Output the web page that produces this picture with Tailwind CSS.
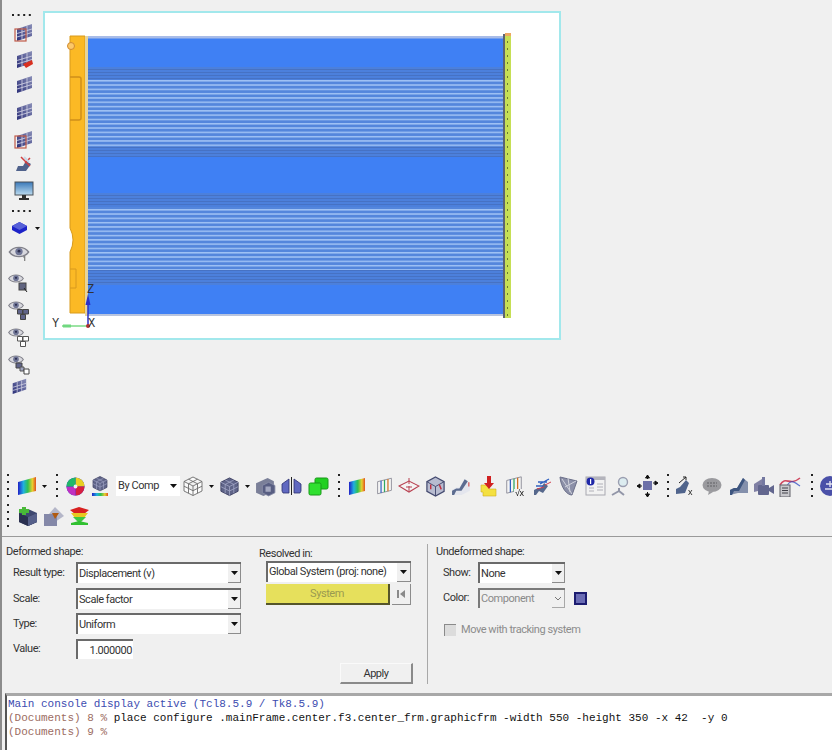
<!DOCTYPE html>
<html><head><meta charset="utf-8">
<script src="https://cdn.jsdelivr.net/npm/@tailwindcss/browser@4"></script>
</head>
<body class="m-0 bg-[#f0f0f0]">
<svg width="0" height="0" class="absolute">
<defs>
<linearGradient id="rb" x1="0" x2="1" y1="0" y2="0"><stop offset="0" stop-color="#2020c8"/><stop offset=".3" stop-color="#20b0e0"/><stop offset=".55" stop-color="#30c050"/><stop offset=".8" stop-color="#e8d030"/><stop offset="1" stop-color="#e05020"/></linearGradient>
<linearGradient id="pn" x1="0" x2="1" y1="1" y2="0"><stop offset="0" stop-color="#2b2f78"/><stop offset="1" stop-color="#8a8fb8"/></linearGradient>
<linearGradient id="sc" x1="0" x2="0" y1="0" y2="1"><stop offset="0" stop-color="#3a78b8"/><stop offset="1" stop-color="#bcdcf0"/></linearGradient>
<symbol id="eye" viewBox="0 0 24 16"><path d="M1 8C6 1 18 1 23 8C18 15 6 15 1 8Z" fill="#d8d8de" stroke="#80808a" stroke-width="1.6"/><circle cx="12" cy="7.5" r="4.2" fill="#6f7596"/><circle cx="12" cy="7" r="1.6" fill="#2d2f50"/></symbol>
<symbol id="panel" viewBox="0 0 20 20"><path d="M3 7L18 2V14L3 19Z" fill="url(#pn)"/><path d="M8 5.5V17.5M13 4V16M3 11.5L18 7M3 15L18 10.5" stroke="#d8d8e8" stroke-width=".8" fill="none"/></symbol>
<symbol id="dotsv" viewBox="0 0 4 26"><rect x="1" y="1" width="2" height="2" fill="#222"/><rect x="1" y="8" width="2" height="2" fill="#222"/><rect x="1" y="15" width="2" height="2" fill="#222"/><rect x="1" y="22" width="2" height="2" fill="#222"/></symbol>
<symbol id="cube" viewBox="0 0 22 22"><path d="M11 2L20 6.5V16L11 20.5L2 16V6.5Z" fill="#5f6488" stroke="#3d4063" stroke-width="1"/><path d="M2 6.5L11 11L20 6.5M11 11V20.5M6.5 4.2L15.5 8.8M15.500 4.200L6.500 8.800M6.500 8.800V18.200M15.500 8.800V18.200M2 11.200L11 15.700L20 11.200" stroke="#a4a8c8" stroke-width=".8" fill="none"/></symbol>
<symbol id="lines" viewBox="0 0 22 22"><path d="M3 6L19 2V16L3 20Z" fill="#f4f4f4" stroke="#8a8a96"/><path d="M7 5V19" stroke="#3060c0" stroke-width="1.4"/><path d="M11 4V18" stroke="#30a860" stroke-width="1.4"/><path d="M15 3V17" stroke="#d07020" stroke-width="1.4"/></symbol>
</defs>
</svg>

<div class="w-[832px] h-[750px] overflow-hidden flex flex-col font-['Roboto',sans-serif] text-[11px] leading-[14px] tracking-[-0.45px] text-[#333] border-l-2 border-[#8c8c8c] box-border">

  <!-- workspace -->
  <div class="flex h-[472px] shrink-0 pt-[11px] blur-[0.3px]">
    <div class="w-[41px] shrink-0 flex flex-col items-center -mt-[11px]">
      <svg class="w-[24px] h-[2px] mt-[14px] shrink-0" viewBox="0 0 24 2"><path d="M1 1H22" stroke="#222" stroke-width="2" stroke-dasharray="2 3.6"/></svg>
      <svg class="w-[20px] h-[20px] mt-[6px] ml-[3px] shrink-0"><use href="#panel"/><rect x="1" y="7" width="11" height="12" fill="none" stroke="#c05a48" stroke-width="1.2"/></svg>
      <svg class="w-[20px] h-[20px] mt-[7px] ml-[3px] shrink-0"><use href="#panel"/><path d="M9 15L18 11L19 15L12 19Z" fill="#d83020"/></svg>
      <svg class="w-[20px] h-[20px] mt-[5px] ml-[3px] shrink-0"><use href="#panel"/></svg>
      <svg class="w-[20px] h-[20px] mt-[7px] ml-[3px] shrink-0"><use href="#panel"/></svg>
      <svg class="w-[20px] h-[20px] mt-[8px] ml-[3px] shrink-0"><use href="#panel"/><rect x="1" y="7" width="11" height="12" fill="none" stroke="#c05a48" stroke-width="1.2"/></svg>
      <svg class="w-[20px] h-[20px] mt-[5px] ml-[3px] shrink-0" viewBox="0 0 20 20"><path d="M2 17L4 12H9L12 7L17 10L12 17Z" fill="#50628c"/><path d="M7 3L16 12M16 4L11 9" stroke="#d04040" stroke-width="1.5"/><path d="M10 3L15 8" stroke="#c8d8e8" stroke-width="2"/></svg>
      <svg class="w-[20px] h-[20px] mt-[7px] ml-[3px] shrink-0" viewBox="0 0 20 20"><rect x="1" y="1" width="18" height="13" fill="url(#sc)" stroke="#4a5058"/><rect x="8" y="14" width="4" height="3" fill="#303030"/><rect x="5" y="17" width="10" height="2" fill="#303030"/></svg>
      <svg class="w-[24px] h-[2px] mt-[9px] shrink-0" viewBox="0 0 24 2"><path d="M1 1H22" stroke="#222" stroke-width="2" stroke-dasharray="2 3.6"/></svg>
      <div class="flex items-center w-full h-[14px] mt-[9px] pl-[9px] gap-[7px]">
        <svg class="w-[17px] h-[14px]" viewBox="0 0 17 14"><path d="M8.500 1L16 5V9L8.500 13L1 9V5Z" fill="#1c22c8"/><path d="M8.500 1L16 5L8.500 9L1 5Z" fill="#5660d8"/></svg>
        <svg class="w-[5px] h-[3px]" viewBox="0 0 5 3"><path d="M0 0H5L2.500 3Z" fill="#111"/></svg>
      </div>
      <div class="relative w-[22px] h-[14px] mt-[10px] -ml-[8px]"><svg class="w-[22px] h-[14px]"><use href="#eye"/></svg><span class="absolute left-[15px] top-[10px] text-[7px] leading-[8px] font-bold text-[#666]">1</span></div>
      <div class="relative w-[22px] h-[12px] mt-[14px] -ml-[8px]"><svg class="w-[16px] h-[11px]"><use href="#eye"/></svg><svg class="absolute left-[10px] top-[9px] w-[10px] h-[11px]" viewBox="0 0 10 11"><rect x="1" y="1" width="7" height="7" fill="#606480" stroke="#444"/><path d="M6 6L9 10" stroke="#222"/></svg></div>
      <div class="relative w-[22px] h-[12px] mt-[15px] -ml-[8px]"><svg class="w-[16px] h-[11px]"><use href="#eye"/></svg><svg class="absolute left-[9px] top-[9px] w-[12px] h-[11px]" viewBox="0 0 12 11"><path d="M.5.5H5.500V5H.5ZM6 .5H11.500V5H6ZM3.500 5.500H8.500V10.500H3.500Z" fill="#60648a" stroke="#444"/></svg></div>
      <div class="relative w-[22px] h-[12px] mt-[15px] -ml-[8px]"><svg class="w-[16px] h-[11px]"><use href="#eye"/></svg><svg class="absolute left-[9px] top-[9px] w-[12px] h-[11px]" viewBox="0 0 12 11"><path d="M.5.5H5.500V5H.5ZM6 .5H11.500V5H6ZM3.500 5.500H8.500V10.500H3.500Z" fill="#fff" stroke="#555"/></svg></div>
      <div class="relative w-[22px] h-[12px] mt-[15px] -ml-[8px]"><svg class="w-[16px] h-[11px]"><use href="#eye"/></svg><svg class="absolute left-[7px] top-[8px] w-[15px] h-[13px]" viewBox="0 0 15 13"><path d="M1 1H7V6H1Z" fill="#60648a" stroke="#444"/><path d="M5 5H9V9H5Z" fill="#a0a4c0" stroke="#555"/><path d="M9 7H14V12H9Z" fill="#fff" stroke="#444"/></svg></div>
      <svg class="w-[18px] h-[18px] mt-[11px] -ml-[8px] shrink-0"><use href="#panel"/></svg>
    </div>

    <!-- graphics frame -->
    <div class="w-[518px] h-[329px] shrink-0 border-2 border-[#a2e8ec] bg-white overflow-hidden box-border">
      <svg class="-ml-[2px] -mt-[2px] block" width="518" height="329" viewBox="43 11 518 329">
        <defs>
          <pattern id="st" width="415" height="4.300" patternUnits="userSpaceOnUse" y="80"><rect width="415" height="4.300" fill="#5486dc"/><rect width="415" height="1.500" fill="#a0c2f4"/></pattern>
          <pattern id="dk" width="415" height="3" patternUnits="userSpaceOnUse"><rect width="415" height="3" fill="#4c80dc"/><rect width="415" height="1" fill="#4672c4"/></pattern>
        </defs>
        <rect x="88" y="36" width="415" height="280" fill="#3f80f4"/>
        <rect x="88" y="36" width="415" height="2.500" fill="#a8bce8"/>
        <rect x="88" y="80" width="415" height="67" fill="url(#st)"/>
        <rect x="88" y="67" width="415" height="13" fill="url(#dk)"/>
        <rect x="88" y="147" width="415" height="10" fill="url(#dk)"/>
        <rect x="88" y="207" width="415" height="63" fill="url(#st)"/>
        <rect x="88" y="193" width="415" height="14" fill="url(#dk)"/>
        <rect x="88" y="270" width="415" height="15" fill="url(#dk)"/>
        <rect x="88" y="314" width="415" height="2" fill="#b8c4de"/>
        <path d="M70 36H85V313H70V252Q76 240 70 228Z" fill="#fbb925" stroke="#d89a1c" stroke-width="1"/>
        <rect x="85" y="36" width="3" height="280" fill="#e6d49a"/>
        <circle cx="71" cy="46" r="3.500" fill="#fcc868" stroke="#d08a30"/>
        <path d="M70 77H79Q81 77 81 79V118Q81 120 79 120H70" fill="none" stroke="#d08f1a" stroke-width="1.500"/>
        <path d="M70 269H76V288H70" fill="none" stroke="#d8991e" stroke-width="1"/>
        <rect x="503" y="34" width="2" height="284" fill="#5c6470"/>
        <rect x="505" y="34" width="6" height="284" fill="#c6df55"/>
        <path d="M507.500 34V318" stroke="#6c7a30" stroke-width="1" stroke-dasharray="2 5"/>
        <rect x="505" y="33" width="6" height="3" fill="#eda860"/>
        <path d="M88 325V299" stroke="#2a30c8" stroke-width="1.500"/><path d="M88 294L90.500 305H85.500Z" fill="#2a30c8"/>
        <path d="M62 326H88" stroke="#38c848" stroke-width="1"/><rect x="63" y="324.500" width="8" height="3" fill="#70d880"/>
        <circle cx="88" cy="326" r="2" fill="#b03030"/>
        <text x="87" y="293" font-family="Liberation Mono" font-size="12" fill="#333">Z</text>
        <text x="52" y="327" font-family="Liberation Mono" font-size="12" fill="#333">Y</text>
        <text x="88" y="327" font-family="Liberation Mono" font-size="12" fill="#333">X</text>
      </svg>
    </div>
  </div>

  <!-- toolbar -->
  <div class="h-[64px] shrink-0 flex flex-col blur-[0.3px]">
    <div class="flex items-center h-[26px] mt-[1px] whitespace-nowrap [&>*]:shrink-0">
      <span class="w-[12px] flex justify-center"><svg class="w-[4px] h-[26px] shrink-0"><use href="#dotsv"/></svg></span>
      <span class="w-[26px] flex justify-center"><svg class="w-[20px] h-[20px] shrink-0" viewBox="0 0 20 20"><path d="M1 6L19 1V15L1 19Z" fill="url(#rb)"/></svg></span>
      <span class="w-[8px] flex justify-center"><svg class="w-[5px] h-[3px]" viewBox="0 0 5 3"><path d="M0 0H5L2.500 3Z" fill="#111"/></svg></span>
      <span class="w-[18px] flex justify-center"><svg class="w-[4px] h-[26px] shrink-0"><use href="#dotsv"/></svg></span>
      <span class="w-[18px] flex justify-center"><svg class="w-[19px] h-[19px] shrink-0" viewBox="0 0 20 20"><circle cx="10" cy="10" r="9.500" fill="#2030d0"/><path d="M10 10L10 .5A9.500 9.500 0 0 1 19.500 10Z" fill="#e8d020"/><path d="M10 10L19.500 10A9.500 9.500 0 0 1 10 19.500Z" fill="#d82040"/><path d="M10 10L10 19.500A9.500 9.500 0 0 1 .5 10Z" fill="#c030c0"/><path d="M10 10L.5 10A9.500 9.500 0 0 1 10 .5Z" fill="#20b868"/><circle cx="10" cy="10" r="2" fill="#f0f0f0"/></svg></span>
      <span class="w-[32px] flex justify-center"><svg class="w-[20px] h-[22px] shrink-0" viewBox="0 0 20 22"><use href="#cube" width="18" height="17" x="1" y="0"/><rect x="2" y="18" width="16" height="3" fill="url(#rb)"/></svg></span>
      <div class="w-[64px] h-[20px] bg-white flex items-center justify-between pl-[2px] pr-[3px]"><span class="text-[11px]">By Comp</span><svg class="w-[7px] h-[4px]" viewBox="0 0 7 4"><path d="M0 0H7L3.500 4Z" fill="#111"/></svg></div>
      <span class="w-[26px] flex justify-center"><svg class="w-[22px] h-[22px] shrink-0 opacity-70" viewBox="0 0 22 22"><path d="M11 2L20 6.500V16L11 20.500L2 16V6.500ZM2 6.500L11 11L20 6.500M11 11V20.500M6.500 4.200L15.500 8.800M15.500 4.200L6.500 8.800M6.500 8.800V18.200M15.500 8.800V18.200M2 11.200L11 15.700L20 11.200" stroke="#333" fill="#fff" stroke-width=".9"/></svg></span>
      <span class="w-[10px] flex justify-center"><svg class="w-[5px] h-[3px]" viewBox="0 0 5 3"><path d="M0 0H5L2.500 3Z" fill="#111"/></svg></span>
      <span class="w-[26px] flex justify-center"><svg class="w-[21px] h-[21px] shrink-0"><use href="#cube"/></svg></span>
      <span class="w-[10px] flex justify-center"><svg class="w-[5px] h-[3px]" viewBox="0 0 5 3"><path d="M0 0H5L2.500 3Z" fill="#111"/></svg></span>
      <span class="w-[26px] flex justify-center"><svg class="w-[21px] h-[21px] shrink-0" viewBox="0 0 20 20"><path d="M1 7L12 2L18 5V15L8 19L1 16Z" fill="#7a7f98"/><path d="M7 9L13 6L19 9V16L13 19L7 16Z" fill="#585e82" stroke="#8a8fa8" stroke-width=".8"/><rect x="10" y="10" width="5" height="5" fill="#a4a8c0"/></svg></span>
      <span class="w-[26px] flex justify-center"><svg class="w-[21px] h-[20px] shrink-0" viewBox="0 0 21 20"><path d="M1 15V8L8 3V17H2Z" fill="#6068c0" stroke="#2c3070" stroke-width=".8"/><path d="M20 15V8L13 3V17H19Z" fill="#6068c0" stroke="#2c3070" stroke-width=".8"/><path d="M10.500 1V19" stroke="#222"/></svg></span>
      <span class="w-[28px] flex justify-center"><svg class="w-[21px] h-[19px] shrink-0" viewBox="0 0 21 19"><rect x="7" y="1" width="13" height="11" rx="1.500" fill="#20d020" stroke="#189818"/><rect x="1" y="6" width="12" height="12" rx="1.500" fill="#30e030" stroke="#189818"/></svg></span>
      <span class="w-[14px] flex justify-center"><svg class="w-[4px] h-[26px] shrink-0"><use href="#dotsv"/></svg></span>
      <span class="w-[22px] flex justify-center"><svg class="w-[18px] h-[19px] shrink-0" viewBox="0 0 18 19"><path d="M1 5L17 1V14L1 18Z" fill="url(#rb)"/></svg></span>
      <span class="w-[32px] flex justify-center"><svg class="w-[19px] h-[20px] shrink-0"><use href="#lines"/></svg></span>
      <span class="w-[18px] flex justify-center"><svg class="w-[22px] h-[18px] shrink-0" viewBox="0 0 22 18"><path d="M1 9L11 4L21 9L11 15Z" fill="#f4f4f4" stroke="#b84050" stroke-width="1.100"/><path d="M11 1V7M8 10H14M11 9V14" stroke="#b84050"/></svg></span>
      <span class="w-[34px] flex justify-center"><svg class="w-[21px] h-[21px] shrink-0" viewBox="0 0 22 22"><path d="M11 1L20 6V16L11 21L2 16V6Z" fill="#b8bcd0" stroke="#444a70" stroke-width="1.300"/><path d="M2 6L11 11L20 6M11 11V21" stroke="#444a70" fill="none"/><path d="M6 9V14M15 9L17 14" stroke="#c03040" stroke-width="1.500"/></svg></span>
      <span class="w-[18px] flex justify-center"><svg class="w-[21px] h-[21px] shrink-0" viewBox="0 0 20 20"><path d="M1 18V13L5 11H8L13 3L18 7V14L10 18Z" fill="#e4e6ee"/><path d="M1 18V14L5 12H8L13 3L16 5L10 14H5L3 18Z" fill="#5c6c90"/><path d="M17 6V10" stroke="#d04040"/></svg></span>
      <span class="w-[36px] flex justify-center"><svg class="w-[17px] h-[22px] shrink-0" viewBox="0 0 17 22"><path d="M1 10H9V14H16V21H3V17H1Z" fill="#f4e040" stroke="#d0b020" stroke-width=".6"/><path d="M7 1H11V8H14L9 14L4 8H7Z" fill="#d02020"/></svg></span>
      <span class="w-[18px] flex justify-center"><svg class="w-[22px] h-[22px] shrink-0" viewBox="0 0 22 22"><use href="#lines" width="20" height="20"/><rect x="10" y="14" width="11" height="7" fill="#f0f0f0"/><text x="11" y="21" font-family="Liberation Sans" font-size="9" fill="#111">√x</text></svg></span>
      <span class="w-[26px] ml-[6px] flex justify-center"><svg class="w-[20px] h-[20px] shrink-0" viewBox="0 0 20 20"><path d="M1 19V14L5 12H8L11 7L15 10L10 17L6 15L3 19Z" fill="#56688c"/><path d="M5 6H14M3 10H10M7 8L16 3" stroke="#3060c0" stroke-width="1.400"/><path d="M4 13L11 11M12 9L18 6" stroke="#d04050"/></svg></span>
      <span class="w-[24px] flex justify-center"><svg class="w-[19px] h-[21px] shrink-0" viewBox="0 0 19 21"><path d="M1 1L18 5L13 19C8 19 2 12 1 1Z" fill="#8c90a8" stroke="#6a6e88"/><path d="M3 3L13 18M17 5L6 11M9 2L11 16" stroke="#d0d2dc" stroke-width="1"/></svg></span>
      <span class="w-[30px] flex justify-center"><svg class="w-[21px] h-[20px] shrink-0" viewBox="0 0 21 20"><rect x="1" y="1" width="19" height="18" fill="#f2f2f2" stroke="#a8a8b0"/><rect x="1" y="1" width="19" height="3" fill="#b4b4bc"/><circle cx="5.500" cy="5.500" r="4" fill="#2028a8"/><rect x="5" y="3" width="1.200" height="5" fill="#fff"/><path d="M12 8H18M12 11H18M12 14H18M4 12H9M4 15H9" stroke="#b0b0b8"/></svg></span>
      <span class="w-[20px] flex justify-center"><svg class="w-[20px] h-[21px] shrink-0" viewBox="0 0 20 21"><circle cx="13" cy="6" r="4.500" fill="#dcecf0" stroke="#9a9eb0" stroke-width="1.400"/><path d="M9 12V15M9 15L2 19M9 15L14 19" stroke="#9296a8" stroke-width="2" fill="none"/></svg></span>
      <span class="w-[34px] flex justify-center"><svg class="w-[21px] h-[22px] shrink-0" viewBox="0 0 21 22"><rect x="6" y="6" width="9" height="9" fill="#6c70a8"/><path d="M10.500 0V4M8.500 3H12.500L10.500 0ZM10.500 17V22M8.500 19H12.500L10.500 22ZM1 11H5M3 9V13L0 11ZM16 8H20M18 6V10L21 8Z" stroke="#111" fill="#111"/></svg></span>
      <span class="w-[8px] flex justify-center"><svg class="w-[4px] h-[26px] shrink-0"><use href="#dotsv"/></svg></span>
      <span class="w-[26px] flex justify-center"><svg class="w-[20px] h-[20px] shrink-0" viewBox="0 0 20 20"><path d="M1 18V13L5 11L11 4L14 7L10 17Z" fill="#50648c"/><path d="M4 7L11 1M11 1H8M11 1V4" stroke="#222" fill="none"/><text x="13" y="19" font-family="Liberation Sans" font-size="9" fill="#222">x</text></svg></span>
      <span class="w-[28px] flex justify-center"><svg class="w-[20px] h-[18px] shrink-0" viewBox="0 0 20 18"><ellipse cx="10" cy="8" rx="9.500" ry="7" fill="#9a9a9e"/><path d="M7 14L6 18L11 15Z" fill="#9a9a9e"/><path d="M5 6H15M5 9H15" stroke="#606064" stroke-dasharray="2 1"/></svg></span>
      <span class="w-[26px] flex justify-center"><svg class="w-[20px] h-[20px] shrink-0" viewBox="0 0 20 20"><path d="M1 19V14L5 12H8L14 2L19 6V17H9Z" fill="#8490ac"/><path d="M1 19V14L5 12H8L14 2L16 4L10 15H5L3 19Z" fill="#3e5680"/></svg></span>
      <span class="w-[24px] flex justify-center"><svg class="w-[22px] h-[21px] shrink-0" viewBox="0 0 22 21"><path d="M1 8L9 3V14L1 16Z" fill="#8080a4"/><rect x="5" y="9" width="11" height="10" rx="1" fill="#62668e"/><path d="M16 12L21 9V18L16 15Z" fill="#62668e"/><rect x="9" y="1" width="3" height="9" fill="#7478a0"/></svg></span>
      <span class="w-[28px] flex justify-center"><svg class="w-[22px] h-[22px] shrink-0" viewBox="0 0 22 22"><path d="M1 10C7 0 10 12 21 3" stroke="#d04860" stroke-width="1.600" fill="none"/><path d="M7 13C11 3 15 7 21 11" stroke="#2040c0" stroke-width="1.200" fill="none" opacity=".7"/><rect x="1" y="10" width="10" height="12" fill="#c8c8cc" stroke="#606068"/><path d="M3 13H9M3 15.500H9M3 18H9" stroke="#404048"/></svg></span>
      <span class="w-[16px] flex justify-center"><svg class="w-[4px] h-[26px] shrink-0"><use href="#dotsv"/></svg></span>
      <span class="w-[20px] flex justify-start"><svg class="w-[20px] h-[20px] shrink-0" viewBox="0 0 20 20"><circle cx="10" cy="10" r="10" fill="#4a50a8"/><path d="M6 8H14M10 5V11M5 13H15" stroke="#e0e0f0" stroke-width="1.400"/></svg></span>
    </div>
    <div class="flex items-center h-[26px] mt-[4px] [&>*]:shrink-0">
      <span class="w-[12px] flex justify-center"><svg class="w-[4px] h-[26px] shrink-0"><use href="#dotsv"/></svg></span>
      <span class="w-[26px] flex justify-center"><svg class="w-[21px] h-[21px] shrink-0" viewBox="0 0 21 21"><path d="M2 7L11 3L20 7V16L11 20L2 16Z" fill="#3e4870"/><path d="M2 7L11 11L20 7V16L11 20L2 16Z" fill="#2a3050"/><path d="M11 11V20L20 16V7Z" fill="#56608a"/><path d="M5 1H9V3H12V7H9V9H5V7H2V3H5Z" fill="#48b838"/></svg></span>
      <span class="w-[26px] flex justify-center"><svg class="w-[21px] h-[21px] shrink-0" viewBox="0 0 21 21"><path d="M12 1L21 10L12 16L6 8Z" fill="#b4b6c8"/><rect x="1" y="8" width="13" height="12" fill="#8488a8"/><path d="M9 7H16L12 13Z" fill="#b05a10"/></svg></span>
      <span class="w-[26px] flex justify-center"><svg class="w-[21px] h-[21px] shrink-0" viewBox="0 0 21 21"><path d="M1 4L10 1L20 4L15 8H6Z" fill="#d82020"/><path d="M2 7H19L15 12H6Z" fill="#e8c820"/><path d="M4 11H17L12 16H9Z" fill="#40c840"/><path d="M2 17L10 15L19 17V19H2Z" fill="#30c030"/></svg></span>
    </div>
  </div>

  <!-- options panel -->
  <div class="h-[157px] shrink-0 border-t border-[#9a9a9a] flex">
    <div class="w-[257px] shrink-0 pl-[4px] pt-[8px]">
      <div class="h-[14px]">Deformed shape:</div>
      <div class="flex items-center h-[21px] mt-[3px]"><span class="w-[70px] pl-[7px] shrink-0">Result type:</span>
        <div class="w-[165px] h-[21px] border-t-2 border-l-2 border-[#6a6a6a] bg-white flex justify-between items-stretch box-border"><span class="pl-[1px] leading-[19px]">Displacement (v)</span><span class="w-[13px] bg-[#f0f0f0] border-r border-b border-[#8c8c8c] flex items-center justify-center"><svg class="w-[7px] h-[4px]" viewBox="0 0 7 4"><path d="M0 0H7L3.500 4Z" fill="#111"/></svg></span></div></div>
      <div class="flex items-center h-[21px] mt-[5px]"><span class="w-[70px] pl-[7px] shrink-0">Scale:</span>
        <div class="w-[165px] h-[21px] border-t-2 border-l-2 border-[#6a6a6a] bg-white flex justify-between items-stretch box-border"><span class="pl-[1px] leading-[19px]">Scale factor</span><span class="w-[13px] bg-[#f0f0f0] border-r border-b border-[#8c8c8c] flex items-center justify-center"><svg class="w-[7px] h-[4px]" viewBox="0 0 7 4"><path d="M0 0H7L3.500 4Z" fill="#111"/></svg></span></div></div>
      <div class="flex items-center h-[21px] mt-[4px]"><span class="w-[70px] pl-[7px] shrink-0">Type:</span>
        <div class="w-[165px] h-[21px] border-t-2 border-l-2 border-[#6a6a6a] bg-white flex justify-between items-stretch box-border"><span class="pl-[1px] leading-[19px]">Uniform</span><span class="w-[13px] bg-[#f0f0f0] border-r border-b border-[#8c8c8c] flex items-center justify-center"><svg class="w-[7px] h-[4px]" viewBox="0 0 7 4"><path d="M0 0H7L3.500 4Z" fill="#111"/></svg></span></div></div>
      <div class="flex items-center h-[20px] mt-[5px]"><span class="w-[70px] pl-[7px] shrink-0">Value:</span>
        <div class="w-[57px] h-[20px] border-t-2 border-l-2 border-[#6a6a6a] bg-white text-right pr-[1px] leading-[19px] box-border">1.000000</div></div>
    </div>
    <div class="w-[168px] shrink-0 pt-[10px]">
      <div class="h-[14px]">Resolved in:</div>
      <div class="w-[145px] h-[21px] ml-[7px] border-t-2 border-l-2 border-[#6a6a6a] bg-white flex justify-between items-stretch box-border"><span class="pl-px leading-[18px] whitespace-nowrap">Global System (proj: none)</span><span class="w-[14px] shrink-0 bg-[#f0f0f0] border-r border-b border-[#8c8c8c] flex items-center justify-center"><svg class="w-[7px] h-[4px]" viewBox="0 0 7 4"><path d="M0 0H7L3.500 4Z" fill="#111"/></svg></span></div>
      <div class="flex ml-[7px] mt-[2px] gap-[2px]">
        <div class="w-[124px] h-[21px] bg-[#e6e05c] border-r-2 border-b-2 border-[#55552a] text-center leading-[20px] text-[#9a9a50] box-border">System</div>
        <div class="w-[19px] h-[21px] border-r border-b border-[#8c8c8c] flex items-center justify-center box-border"><svg class="w-[8px] h-[8px]" viewBox="0 0 8 8"><rect x="0" y="0" width="2" height="8" fill="#8a8a8a"/><path d="M8 0V8L3 4Z" fill="#8a8a8a"/></svg></div>
      </div>
      <div class="w-[73px] h-[21px] ml-[81px] mt-[58px] border-r-2 border-b-2 border-[#8a8a8a] border-t border-l border-t-[#fafafa] border-l-[#fafafa] text-center leading-[20px] box-border">Apply</div>
    </div>
    <div class="w-px h-[140px] mt-[7px] bg-[#a8a8a8] shrink-0"></div>
    <div class="pl-[8px] pt-[8px]">
      <div class="h-[14px]">Undeformed shape:</div>
      <div class="flex items-center h-[21px] mt-[3px]"><span class="w-[42px] pl-[7px] shrink-0">Show:</span>
        <div class="w-[87px] h-[21px] border-t-2 border-l-2 border-[#6a6a6a] bg-white flex justify-between items-stretch box-border"><span class="pl-[1px] leading-[19px]">None</span><span class="w-[13px] bg-[#f0f0f0] border-r border-b border-[#8c8c8c] flex items-center justify-center"><svg class="w-[7px] h-[4px]" viewBox="0 0 7 4"><path d="M0 0H7L3.500 4Z" fill="#111"/></svg></span></div></div>
      <div class="flex items-center h-[20px] mt-[5px]"><span class="w-[42px] pl-[7px] shrink-0">Color:</span>
        <div class="w-[87px] h-[20px] border-t-2 border-l-2 border-[#7a7a7a] bg-[#f0f0f0] text-[#8a8a8a] flex justify-between items-stretch box-border"><span class="pl-[1px] leading-[18px]">Component</span><span class="w-[13px] border-r border-b border-[#a8a8a8] flex items-center justify-center"><svg class="w-[6px] h-[4px]" viewBox="0 0 6 4"><path d="M0 0L3 3L6 0" stroke="#777" fill="none"/></svg></span></div>
        <div class="w-[13px] h-[13px] ml-[9px] bg-[#6a6cb4] border-2 border-[#1c1c70] box-border"></div></div>
      <div class="flex items-center ml-[8px] mt-[15px] h-[14px] text-[#8c8c8c]">
        <div class="w-[12px] h-[12px] bg-[#dcdcdc] border-t border-l border-[#8a8a8a] box-border"></div><span class="ml-[5px]">Move with tracking system</span></div>
    </div>
  </div>

  <!-- console -->
  <div class="flex-1 ml-[3px] border-t-[3px] border-l-2 border-t-[#a8a8a8] border-l-[#555] bg-white pt-px pl-px font-['Liberation_Mono',monospace] text-[11px] leading-[14px] tracking-normal whitespace-nowrap">
    <div class="text-[#3c4cb0]">Main console display active (Tcl8.5.9 / Tk8.5.9)</div>
    <div class="text-[#111] whitespace-pre"><span class="text-[#9c6c62]">(Documents) 8 % </span>place configure .mainFrame.center.f3.center_frm.graphicfrm -width 550 -height 350 -x 42  -y 0</div>
    <div class="text-[#9c6c62]">(Documents) 9 %</div>
  </div>
</div>
</body></html>
